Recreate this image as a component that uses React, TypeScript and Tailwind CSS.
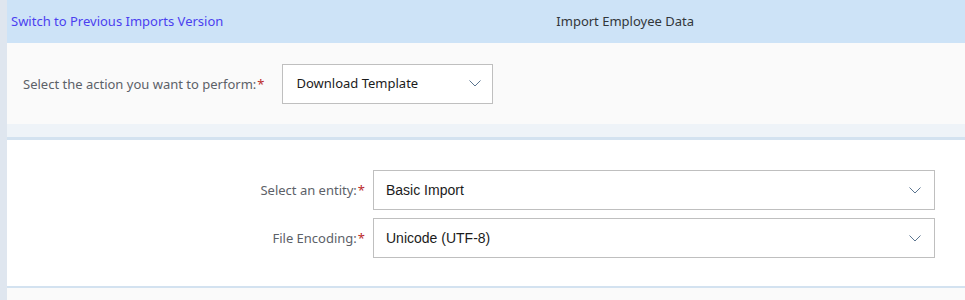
import React from "react";

function Chevron() {
  return (
    <svg width="12" height="7" viewBox="0 0 12 7" fill="none" className="shrink-0">
      <path d="M0.5 0.5 L6 6 L11.5 0.5" stroke="#5b7590" strokeWidth="1" />
    </svg>
  );
}

function Dropdown({ value, className, textClass }: { value: string; className: string; textClass: string }) {
  return (
    <div className={`flex items-center justify-between border border-[#bfbfbf] bg-white ${className}`}>
      <span className={`text-[#1b1b1b] ${textClass}`}>{value}</span>
      <Chevron />
    </div>
  );
}

function Label({ text }: { text: string }) {
  return (
    <span className="text-[13px] text-[#5c6168] pt-[2px]">
      {text}
      <span className="text-[#bb2a2a] ml-[1px]">*</span>
    </span>
  );
}

export default function App() {
  return (
    <div className="w-[965px] h-[300px] bg-[#dfe6ef] pl-[7px] overflow-hidden font-['Noto_Sans',sans-serif]">
      <div className="h-[43px] bg-[#cde3f7] flex items-center">
        <a href="#" className="ml-[4px] text-[13px] text-[#4b3ff0]">
          Switch to Previous Imports Version
        </a>
        <span className="ml-[333px] text-[13px] text-[#32363a]">Import Employee Data</span>
      </div>

      <div className="h-[81px] bg-[#fafafa] flex items-center pl-[16px] gap-[18px]">
        <Label text="Select the action you want to perform:" />
        <Dropdown value="Download Template" className="w-[211px] h-[40px] pl-[13px] pr-[11px]" textClass="text-[13px]" />
      </div>

      <div className="h-[13px] bg-[#eef3f8]" />
      <div className="h-[3px] bg-[#d3e2f0]" />

      <div className="h-[146px] bg-white flex flex-col items-end pr-[30px] pt-[30px] gap-[8px]">
        <div className="flex items-center gap-[8px]">
          <Label text="Select an entity:" />
          <Dropdown value="Basic Import" className="w-[562px] h-[40px] pl-[12px] pr-[13px]" textClass="text-[14px] font-['Liberation_Sans',sans-serif]" />
        </div>
        <div className="flex items-center gap-[8px]">
          <Label text="File Encoding:" />
          <Dropdown value="Unicode (UTF-8)" className="w-[562px] h-[40px] pl-[12px] pr-[13px]" textClass="text-[14px] font-['Liberation_Sans',sans-serif]" />
        </div>
      </div>

      <div className="h-[2px] bg-[#d3e2f0]" />
      <div className="h-[12px] bg-[#fafafa]" />
    </div>
  );
}
